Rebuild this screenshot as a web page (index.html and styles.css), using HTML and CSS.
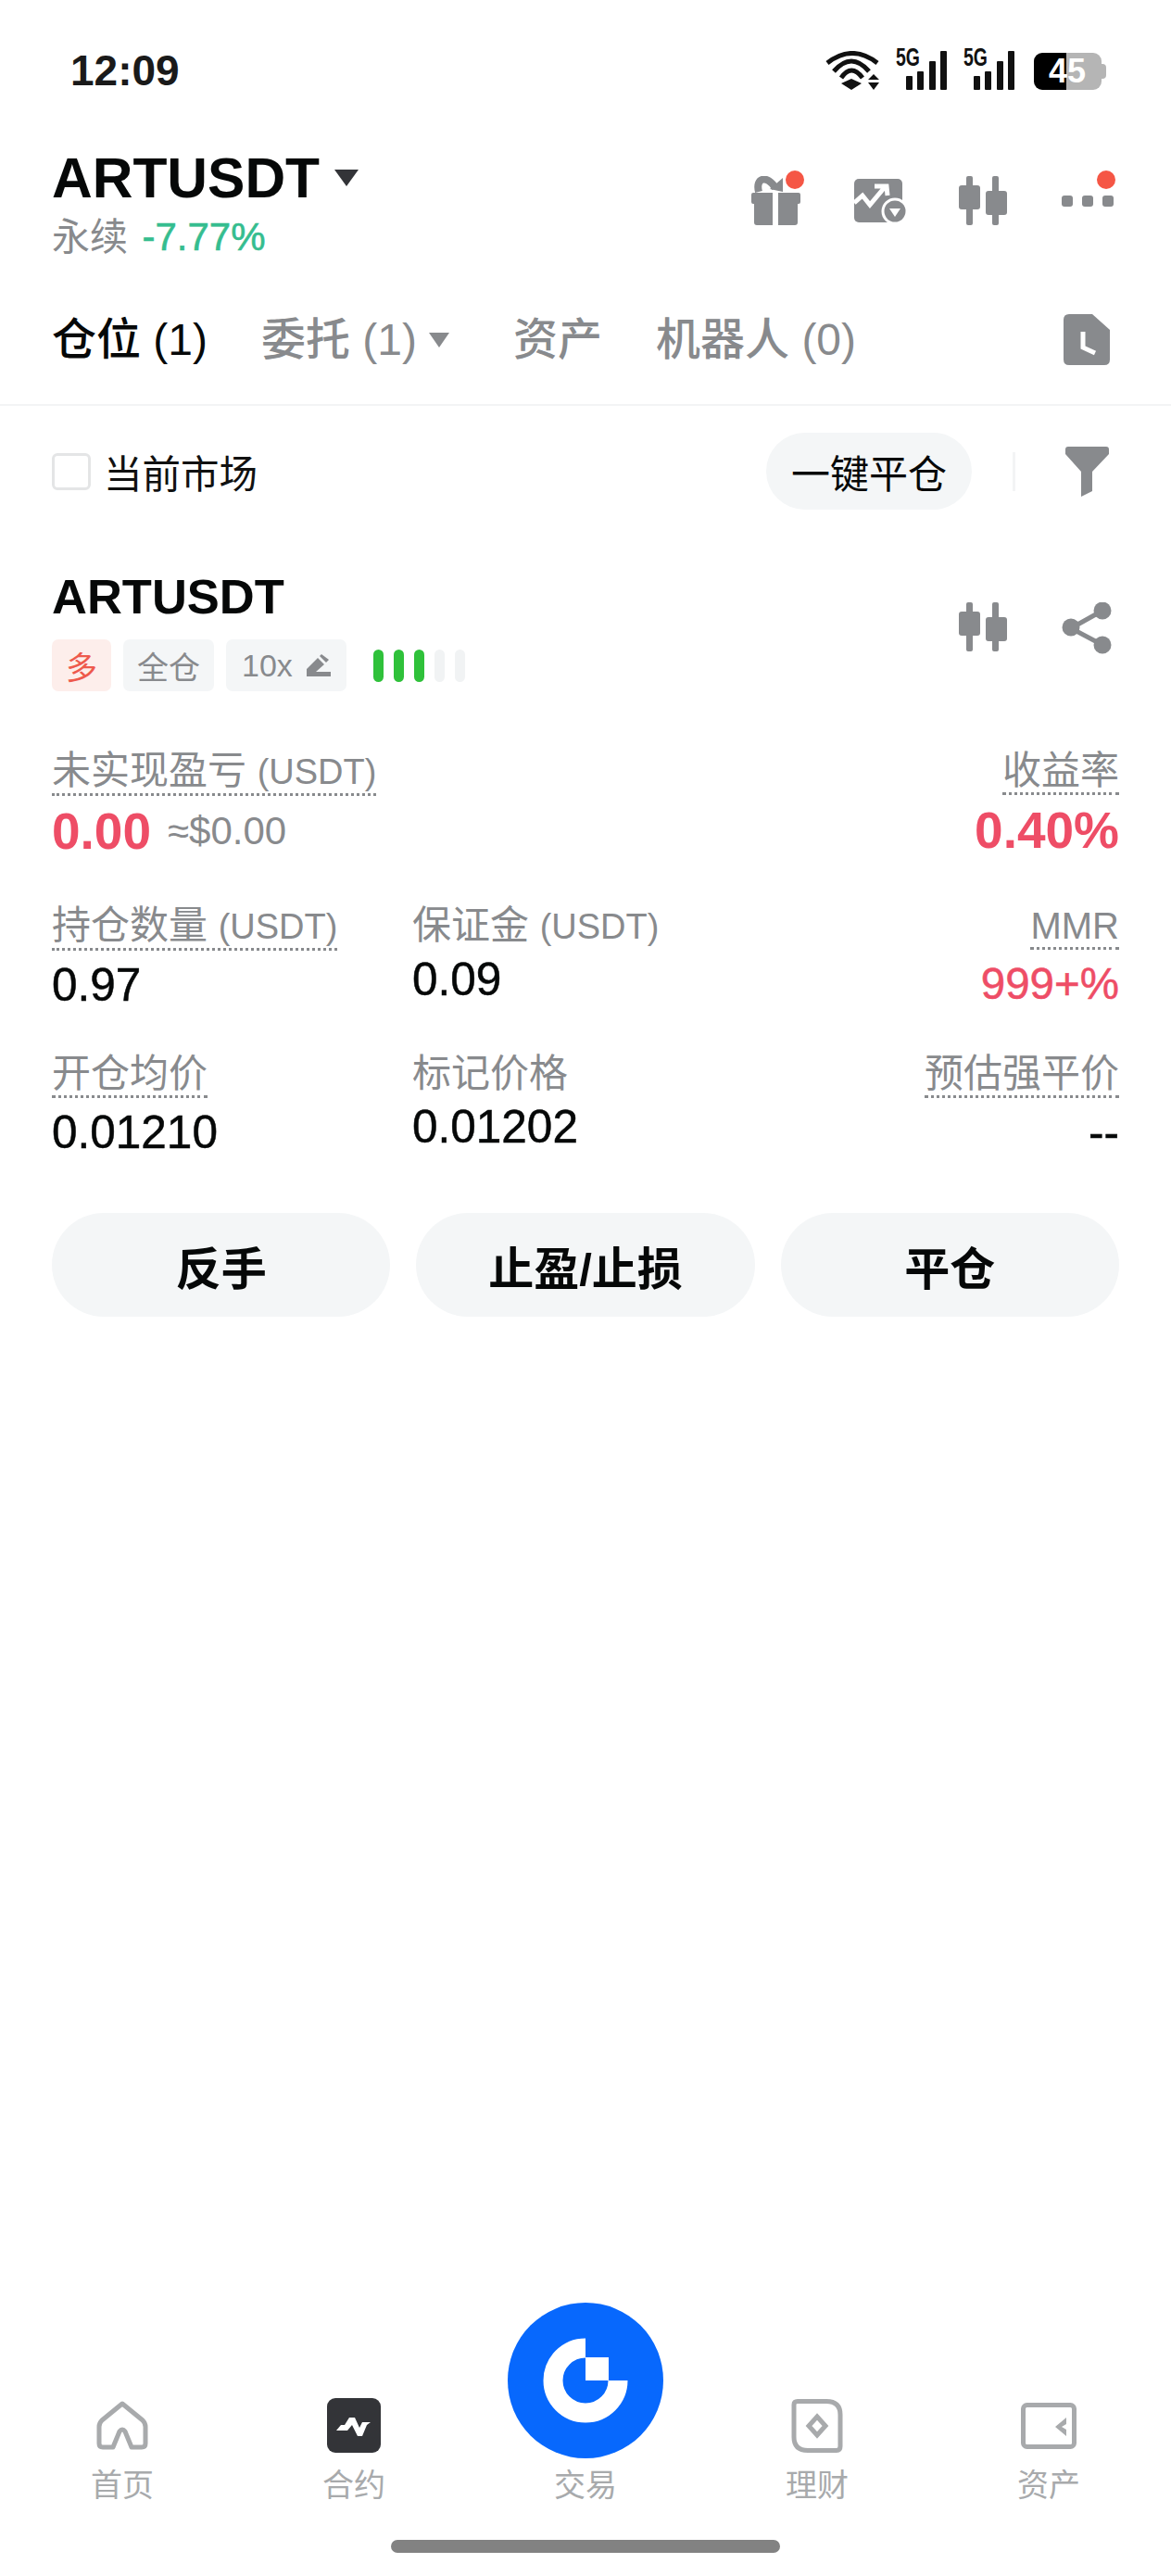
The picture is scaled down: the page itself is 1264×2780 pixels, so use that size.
FILE: index.html
```html
<!DOCTYPE html>
<html lang="zh-CN">
<head>
    <meta charset="UTF-8">
    <meta name="viewport" content="width=device-width, initial-scale=1.0">
    <title>ARTUSDT</title>
    <link rel="stylesheet" href="styles.css">
</head>
<body>
    <div class="phone">
        <div class="status-bar">
            <span class="clock">12:09</span>
            <div class="status-icons">
                <svg width="58" height="42" viewBox="0 0 58 42">
                    <path d="M2 13 Q29 -8 56 13" fill="none" stroke="#111" stroke-width="5"/>
                    <path d="M9 22 Q28 0 47 22" fill="none" stroke="#111" stroke-width="5"/>
                    <path d="M17 29 Q28 13 40 29" fill="none" stroke="#111" stroke-width="5"/>
                    <path d="M28 30 L39 35 L28 42 L17 35 Z" fill="#111"/>
                    <path d="M52 25 L58 31 H46 Z M46 34 H58 L52 42 Z" fill="#111"/>
                </svg>
                <div class="signal">
                    <span class="net">5G</span>
                    <i class="bar b1"></i><i class="bar b2"></i><i class="bar b3"></i><i class="bar b4"></i>
                </div>
                <div class="signal">
                    <span class="net">5G</span>
                    <i class="bar b1"></i><i class="bar b2"></i><i class="bar b3"></i><i class="bar b4"></i>
                </div>
                <div class="battery"><span class="level">45</span></div>
            </div>
        </div>

        <div class="top-bar">
            <div class="pair">
                <div class="pair-name">ARTUSDT<i class="caret caret-dark"></i></div>
                <div class="pair-sub">永续 <span class="up">-7.77%</span></div>
            </div>
            <div class="top-icons">
                <div class="top-icon">
                    <svg width="56" height="56" viewBox="0 0 56 56">
                        <path d="M9 17 C5 2 18 -2 27 13" fill="none" stroke="#888a8d" stroke-width="8"/>
                        <path d="M35 2 L35 17 L21 14 Z" fill="#888a8d"/>
                        <path d="M3 18 H24 V53 H7 Q4 53 4 50 V30 H3 Q1 30 1 28 V20 Q1 18 3 18 Z" fill="#888a8d"/>
                        <path d="M30 18 H52 Q54 18 54 20 V28 Q54 30 52 30 H51 V50 Q51 53 48 53 H30 Z" fill="#888a8d"/>
                    </svg>
                    <i class="dot dot-gift"></i>
                </div>
                <div class="top-icon">
                    <svg width="56" height="56" viewBox="0 0 56 56">
                        <rect x="0" y="3" width="52" height="47" rx="5" fill="#888a8d"/>
                        <path d="M0 29 L9 21 L17 31 L33 12 M22 11 H35 L36 21" fill="none" stroke="#fff" stroke-width="5"/>
                        <circle cx="44" cy="38" r="14.5" fill="#fff"/>
                        <circle cx="44" cy="38" r="11.5" fill="#888a8d"/>
                        <path d="M38 35 H50 L44 44 Z" fill="#fff"/>
                    </svg>
                </div>
                <div class="top-icon">
                    <svg width="56" height="56" viewBox="0 0 56 56">
                        <use href="#candles"/>
                    </svg>
                </div>
                <div class="top-icon">
                    <svg width="56" height="56" viewBox="0 0 56 56">
                        <rect x="0" y="21" width="12" height="12" rx="3" fill="#888a8d"/>
                        <rect x="22" y="21" width="12" height="12" rx="3" fill="#888a8d"/>
                        <rect x="44" y="21" width="12" height="12" rx="3" fill="#888a8d"/>
                    </svg>
                    <i class="dot dot-more"></i>
                </div>
            </div>
        </div>

        <div class="tabs">
            <span class="tab tab-active">仓位 (1)</span>
            <span class="tab tab-menu">委托 (1)<i class="caret caret-grey"></i></span>
            <span class="tab">资产</span>
            <span class="tab">机器人 (0)</span>
            <svg class="history" width="50" height="55" viewBox="0 0 50 55">
                <path d="M6 0 H31 L50 17 V49 Q50 55 44 55 H6 Q0 55 0 49 V6 Q0 0 6 0 Z" fill="#888a8d"/>
                <path d="M21 19 V36 L34 42" fill="none" stroke="#fff" stroke-width="5"/>
            </svg>
        </div>

        <div class="filter-row">
            <label class="check"><i class="box"></i>当前市场</label>
            <div class="filter-right">
                <button class="pill">一键平仓</button>
                <i class="divider"></i>
                <svg width="47" height="54" viewBox="0 0 47 54">
                    <path d="M3 0 H44 Q47 0 47 3 V8 L29 27 V48 L17 54 V27 L0 8 V3 Q0 0 3 0 Z" fill="#888a8d"/>
                </svg>
            </div>
        </div>

        <div class="position">
            <div class="pos-head">
                <div>
                    <div class="pos-name">ARTUSDT</div>
                    <div class="tags">
                        <span class="tag tag-long">多</span>
                        <span class="tag">全仓</span>
                        <span class="tag tag-lever">10x
                            <svg width="26" height="24" viewBox="0 0 26 24">
                                <path d="M0 24 V16 L12 4 L19 11 L10 19 H26 V24 Z" fill="#888a8d"/>
                                <path d="M14 2 L16 0 L24 6 L21 9 Z" fill="#888a8d"/>
                            </svg>
                        </span>
                        <div class="risk">
                            <i class="on"></i><i class="on"></i><i class="on"></i><i></i><i></i>
                        </div>
                    </div>
                </div>
                <div class="pos-icons">
                    <svg width="56" height="56" viewBox="0 0 56 56">
                        <g id="candles" fill="#888a8d">
                            <rect x="9" y="0" width="7" height="53" rx="2"/>
                            <rect x="1" y="10" width="23" height="26" rx="3"/>
                            <rect x="37" y="0" width="7" height="53" rx="2"/>
                            <rect x="30" y="16" width="23" height="26" rx="3"/>
                        </g>
                    </svg>
                    <svg width="56" height="56" viewBox="0 0 56 56">
                        <path d="M44 9 L10 28 L44 46" fill="none" stroke="#888a8d" stroke-width="5"/>
                        <circle cx="44" cy="9" r="9.5" fill="#888a8d"/>
                        <circle cx="10" cy="27" r="9.5" fill="#888a8d"/>
                        <circle cx="44" cy="46" r="9.5" fill="#888a8d"/>
                    </svg>
                </div>
            </div>

            <div class="stats-top">
                <div class="cell">
                    <span class="label">未实现盈亏 <span class="unit">(USDT)</span></span>
                    <div class="pnl"><b class="red">0.00</b><span class="approx">≈$0.00</span></div>
                </div>
                <div class="cell right">
                    <span class="label">收益率</span>
                    <div class="pnl"><b class="red">0.40%</b></div>
                </div>
            </div>

            <div class="stats-grid">
                <div class="cell">
                    <span class="label">持仓数量 <span class="unit">(USDT)</span></span>
                    <div class="value">0.97</div>
                </div>
                <div class="cell">
                    <span class="label-plain">保证金 <span class="unit">(USDT)</span></span>
                    <div class="value">0.09</div>
                </div>
                <div class="cell right">
                    <span class="label label-mmr">MMR</span>
                    <div class="value value-ratio red">999+%</div>
                </div>
                <div class="cell">
                    <span class="label">开仓均价</span>
                    <div class="value">0.01210</div>
                </div>
                <div class="cell">
                    <span class="label-plain">标记价格</span>
                    <div class="value">0.01202</div>
                </div>
                <div class="cell right">
                    <span class="label">预估强平价</span>
                    <div class="value">--</div>
                </div>
            </div>

            <div class="actions">
                <button class="action">反手</button>
                <button class="action">止盈/止损</button>
                <button class="action">平仓</button>
            </div>
        </div>

        <div class="spacer"></div>

        <nav class="tabbar">
            <div class="nav-item">
                <svg width="56" height="60" viewBox="0 0 56 60">
                    <path d="M28 6 L50 24 Q53 27 53 31 V49 Q53 53 49 53 H38 L31 36 Q28 32 25 36 L18 53 H7 Q3 53 3 49 V31 Q3 27 6 24 Z" fill="none" stroke="#a8aaac" stroke-width="5" stroke-linejoin="round"/>
                </svg>
                <span>首页</span>
            </div>
            <div class="nav-item">
                <svg width="58" height="60" viewBox="0 0 58 60">
                    <rect x="0" y="0" width="58" height="59" rx="9" fill="#333438"/>
                    <path d="M10 35 L15 29 H19 L24 21 H30 L35 32 L38 26 H47 L43 29 L38 41 H33 L27 29 L22 35 Z" fill="#fff"/>
                </svg>
                <span>合约</span>
            </div>
            <div class="nav-item">
                <svg class="logo" width="168" height="168" viewBox="0 0 168 168">
                    <circle cx="84" cy="84" r="84" fill="#0768fd"/>
                    <path d="M84 49 A35 35 0 1 0 119 84" fill="none" stroke="#fff" stroke-width="21"/>
                    <rect x="84" y="59" width="25" height="25" fill="#fff"/>
                </svg>
                <span>交易</span>
            </div>
            <div class="nav-item">
                <svg width="56" height="60" viewBox="0 0 56 60">
                    <path d="M7 3.5 H38 Q53 3.5 53 18 V52 Q53 56.5 49 56.5 H18 Q3 56.5 3 42 V7 Q3 3.5 7 3.5 Z" fill="none" stroke="#a8aaac" stroke-width="5"/>
                    <path d="M28 20 L37 30 L28 40 L19 30 Z" fill="none" stroke="#a8aaac" stroke-width="5"/>
                </svg>
                <span>理财</span>
            </div>
            <div class="nav-item">
                <svg width="60" height="60" viewBox="0 0 60 60">
                    <rect x="2.5" y="7.5" width="55" height="45" rx="4" fill="none" stroke="#a8aaac" stroke-width="5"/>
                    <path d="M49 21 L37 31 L49 41 V34 L44 31 L49 28 Z" fill="#a8aaac"/>
                </svg>
                <span>资产</span>
            </div>
        </nav>
        <div class="home-bar"><i></i></div>
    </div>
</body>
</html>
```

FILE: styles.css
```css
* {
    box-sizing: border-box;
}
body {
    margin: 0;
    background-color: #fff;
    color: #060808;
    font-family: "Liberation Sans", "Noto Sans CJK SC", sans-serif;
}
i {
    display: block;
}
button {
    border: none;
    font-family: inherit;
    color: #060808;
}
.phone {
    width: 1264px;
    height: 2780px;
    display: flex;
    flex-direction: column;
    overflow: hidden;
}
.spacer {
    flex: 1;
}
.up {
    margin-left: 4px;
    font-size: 42px;
    color: #35bd8f;
    -webkit-text-stroke: 0.6px #35bd8f;
}
.red {
    color: #ee4d66;
}

/* status bar */
.status-bar {
    height: 148px;
    padding: 48px 70px 0 76px;
    display: flex;
    justify-content: space-between;
    align-items: flex-start;
}
.clock {
    font-size: 46px;
    font-weight: 700;
    line-height: 56px;
    color: #1a1a1a;
}
.status-icons {
    display: flex;
    align-items: flex-end;
    gap: 18px;
    height: 49px;
}
.signal {
    position: relative;
    width: 55px;
    height: 42px;
    display: flex;
    align-items: flex-end;
    justify-content: flex-end;
    gap: 5.3px;
}
.net {
    position: absolute;
    left: 0;
    top: -6px;
    font-size: 27px;
    font-weight: 700;
    line-height: 27px;
    transform: scaleX(0.72);
    transform-origin: left;
    color: #111;
}
.bar {
    width: 7px;
    background: #111;
    border-radius: 1px;
}
.b1 { height: 15px; }
.b2 { height: 20px; }
.b3 { height: 31px; }
.b4 { height: 42px; }
.battery {
    position: relative;
    width: 73px;
    height: 40px;
    margin: 0 5px 0 3px;
    border-radius: 9px;
    background: linear-gradient(90deg, #000 0, #000 35px, #b5b5b5 35px);
}
.battery::after {
    content: "";
    position: absolute;
    right: -5px;
    top: 12px;
    width: 5px;
    height: 16px;
    border-radius: 0 4px 4px 0;
    background: #b5b5b5;
}
.level {
    display: block;
    padding-left: 16px;
    color: #fff;
    font-size: 36px;
    font-weight: 700;
    line-height: 40px;
}

/* header */
.top-bar {
    height: 149px;
    padding: 11px 62px 0 56px;
    display: flex;
    justify-content: space-between;
}
.pair-name {
    display: flex;
    align-items: center;
    gap: 16px;
    font-size: 60.5px;
    font-weight: 700;
    line-height: 66px;
}
.caret {
    width: 0;
    height: 0;
    border-style: solid;
    border-color: transparent;
}
.caret-dark {
    border-width: 18px 13px 0;
    border-top-color: #333438;
}
.caret-grey {
    border-width: 16px 11.5px 0;
    border-top-color: #888a8d;
}
.pair-sub {
    margin-top: 6px;
    font-size: 41px;
    line-height: 50px;
    color: #888a8d;
}
.top-icons {
    display: flex;
    gap: 56px;
    padding-top: 31px;
}
.top-icon {
    position: relative;
    width: 56px;
    height: 56px;
}
.dot {
    position: absolute;
    width: 20px;
    height: 20px;
    border-radius: 50%;
    background: #f55645;
    box-shadow: 0 0 0 3px #fff;
}
.dot-gift {
    left: 38px;
    top: -6px;
}
.dot-more {
    left: 38px;
    top: -6px;
}

/* tabs */
.tabs {
    height: 141px;
    padding: 0 66px 0 56px;
    display: flex;
    align-items: center;
    border-bottom: 2px solid #f3f4f5;
    gap: 58px;
}
.tab {
    display: flex;
    align-items: center;
    gap: 13px;
    font-size: 48px;
    font-weight: 500;
    color: #888a8d;
    line-height: 60px;
    white-space: pre;
}
.tab-active {
    color: #060808;
}
.tab-menu {
    margin-right: 11px;
}
.history {
    margin-left: auto;
}

/* filter row */
.filter-row {
    height: 141px;
    padding: 0 67px 0 56px;
    display: flex;
    justify-content: space-between;
    align-items: center;
}
.check {
    display: flex;
    align-items: center;
    gap: 14px;
    font-size: 41.5px;
    color: #111;
}
.box {
    width: 42px;
    height: 40px;
    border: 3px solid #e4e5e6;
    border-radius: 6px;
}
.filter-right {
    display: flex;
    align-items: center;
}
.pill {
    width: 222px;
    height: 83px;
    border-radius: 42px;
    background: #f4f6f7;
    font-size: 42px;
    white-space: nowrap;
    padding: 0;
}
.divider {
    width: 3px;
    height: 42px;
    margin: 0 54px 0 44px;
    background: #f3f4f5;
}

/* position card */
.position {
    padding: 0 56px;
}
.pos-head {
    padding-top: 35px;
    display: flex;
    justify-content: space-between;
    align-items: flex-start;
}
.pos-name {
    font-size: 52.5px;
    font-weight: 700;
    line-height: 60px;
}
.tags {
    display: flex;
    align-items: center;
    gap: 13px;
    margin-top: 16px;
}
.tag {
    height: 56px;
    padding: 0 15px;
    display: flex;
    align-items: center;
    gap: 14px;
    border-radius: 7px;
    background: #f4f6f7;
    color: #888a8d;
    font-size: 34px;
}
.tag-lever {
    padding: 0 17px;
    gap: 15px;
}
.tag-long {
    background: #fdeeeb;
    color: #ee5a4d;
}
.risk {
    display: flex;
    gap: 10.5px;
    margin-left: 16px;
}
.risk i {
    width: 11.5px;
    height: 35px;
    border-radius: 6px;
    background: #f1f3f4;
}
.risk .on {
    background: #2fc13a;
}
.pos-icons {
    display: flex;
    gap: 56px;
    padding: 36px 6px 0 0;
}
.stats-top {
    display: flex;
    justify-content: space-between;
    margin-top: 63px;
}
.cell {
    display: flex;
    flex-direction: column;
    align-items: flex-start;
}
.right {
    align-items: flex-end;
}
.label {
    font-size: 42px;
    line-height: 46px;
    color: #888a8d;
    border-bottom: 3px dotted #888a8d;
}
.label-plain {
    font-size: 42px;
    line-height: 46px;
    color: #888a8d;
}
.label-mmr {
    font-size: 40px;
}
.unit {
    font-size: 38px;
}
.pnl {
    display: flex;
    align-items: center;
    height: 68px;
    margin-top: 4px;
    font-size: 55px;
}
.approx {
    margin-left: 18px;
    font-size: 42px;
    color: #888a8d;
}
.stats-grid {
    display: grid;
    grid-template-columns: 389px 1fr 1fr;
    row-gap: 42px;
    margin-top: 45px;
}
.value {
    margin-top: 3px;
    font-size: 49.5px;
    line-height: 62px;
    -webkit-text-stroke: 0.5px currentColor;
}
.label + .value {
    margin-top: 6px;
}
.value-ratio {
    font-size: 47.5px;
}
.actions {
    display: flex;
    gap: 28px;
    margin-top: 56px;
}
.action {
    flex: 1;
    height: 112px;
    border-radius: 56px;
    background: #f4f6f7;
    font-size: 49px;
    font-weight: 700;
}

/* bottom nav */
.tabbar {
    height: 114px;
    padding: 0 7px;
    display: flex;
}
.nav-item {
    position: relative;
    flex: none;
    width: 250px;
    display: flex;
    flex-direction: column;
    align-items: center;
    justify-content: flex-end;
    gap: 14px;
    color: #a8aaac;
    font-size: 34px;
    line-height: 40px;
}
.logo {
    position: absolute;
    left: 41px;
    top: -103px;
}
.home-bar {
    height: 78px;
    padding-top: 39px;
    display: flex;
    justify-content: center;
}
.home-bar i {
    width: 420px;
    height: 14px;
    border-radius: 7px;
    background: #828282;
}
```
